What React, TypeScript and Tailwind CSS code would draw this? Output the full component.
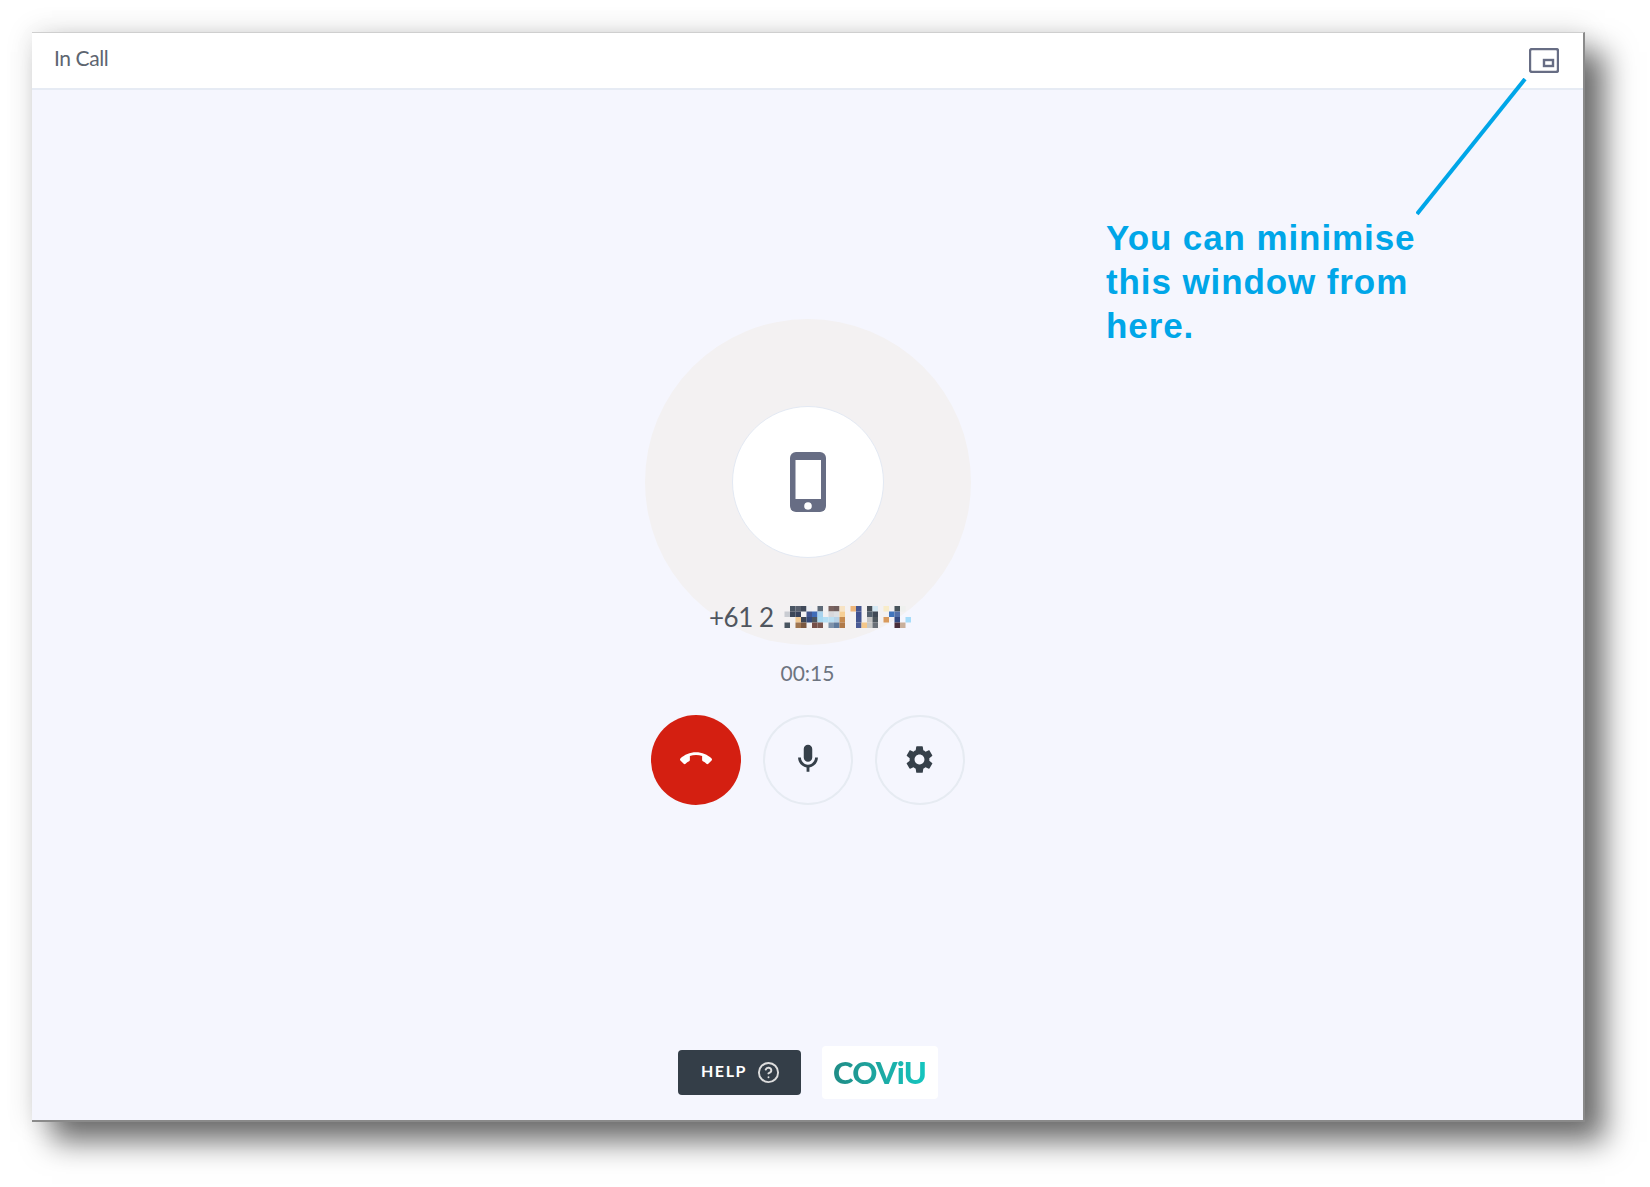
import { CircleHelp } from 'lucide-react';

// blurred phone digits: [col, row, colour]
const mosaic: [number, number, string][] = [
  [1, 0, '#4a5564'], [2, 0, '#59616e'], [3, 0, '#3f4a5a'], [4, 0, '#eef0f4'], [6, 0, '#5d6b78'], [8, 0, '#7a6460'], [9, 0, '#6f5d5c'], [10, 0, '#f7e3c4'],
  [0, 1, '#c9ccd2'], [1, 1, '#3d4658'], [2, 1, '#39435a'], [4, 1, '#42578f'], [5, 1, '#3f6cb8'], [6, 1, '#a9d3ee'], [8, 1, '#d8d8dc'], [9, 1, '#dcdfe3'], [10, 1, '#f6cf95'],
  [2, 2, '#f0c892'], [3, 2, '#3c4552'], [4, 2, '#344a78'], [5, 2, '#4b5560'], [6, 2, '#a7d9f2'], [7, 2, '#b5def4'], [8, 2, '#bbdff2'], [9, 2, '#b8d2e6'], [10, 2, '#c58a4f'],
  [0, 3, '#4a5560'], [2, 3, '#a0744f'], [3, 3, '#7a5840'], [5, 3, '#75504a'], [6, 3, '#7a5650'], [8, 3, '#7f93ab'], [9, 3, '#5f7a9c'], [10, 3, '#b07a4a'],
  [12, 0, '#eeb67a'], [13, 0, '#44558f'], [15, 0, '#465058'], [16, 0, '#d5e9f4'], [18, 0, '#f8ecc8'], [20, 0, '#46525a'], [21, 0, '#eef0ee'],
  [13, 1, '#3f5190'], [15, 1, '#52606e'], [16, 1, '#3f4a56'], [19, 1, '#3f74bc'], [20, 1, '#5270a8'],
  [13, 2, '#43548f'], [15, 2, '#c4c4c4'], [16, 2, '#50585f'], [18, 2, '#d99a5c'], [20, 2, '#324a80'], [22, 2, '#a6dcfa'],
  [13, 3, '#4a5a94'], [14, 3, '#f4c78a'], [15, 3, '#c8c8c6'], [16, 3, '#6a7078'], [20, 3, '#4a2e3a'], [21, 3, '#c9b09c'],
];

function MaskedDigits() {
  return (
    <svg width="130" height="22" viewBox="0 0 127 22" className="ml-[10px] shrink-0">
      <defs>
        <filter id="soft">
          <feGaussianBlur stdDeviation="0.5" />
        </filter>
      </defs>
      <g filter="url(#soft)">
        {mosaic.map(([c, r, fill]) => (
          <rect key={`${c}-${r}`} x={c * 5.5} y={r * 5.5} width="5.5" height="5.5" fill={fill} />
        ))}
      </g>
    </svg>
  );
}

function PhoneIcon() {
  return (
    <svg width="36" height="60" viewBox="0 0 36 60">
      <rect width="36" height="60" rx="6" fill="#676d84" />
      <rect x="5.5" y="8" width="25.5" height="39" fill="#fff" />
      <circle cx="18" cy="54" r="3.8" fill="#fff" />
    </svg>
  );
}

export default function App() {
  return (
    <div className="h-[1187px] w-[1650px] overflow-hidden bg-white pl-[32px] pt-[32px]">
      <div
        className="relative flex h-[1090px] w-[1553px] flex-col border-t border-r-2 border-b-2 border-t-[#cfcfcf] border-r-[#8a8a8a] border-b-[#8a8a8a] bg-[#f5f6fe] shadow-[20px_20px_28px_rgba(0,0,0,0.55),0_0_26px_rgba(0,0,0,0.13)]"
      >
        <header className="flex h-[57px] shrink-0 items-center justify-between border-b-2 border-[#e6ebf4] bg-white pl-[22px] pr-[24px]">
          <span className="pb-1.5 font-['Lato',sans-serif] text-[21px] tracking-[-0.4px] text-[#5d6570]">In Call</span>
          <svg width="30" height="25" viewBox="0 0 30 25" fill="none" stroke="#676d84">
            <rect x="1" y="1" width="28" height="23" rx="2" strokeWidth="2.4" />
            <rect x="15" y="12" width="9" height="6" strokeWidth="2.4" />
          </svg>
        </header>

        <main className="flex flex-1 flex-col items-center pt-[229px]">
          <div className="flex h-[326px] w-[326px] items-center justify-center rounded-full bg-[#f3f1f2]">
            <div className="flex h-[152px] w-[152px] items-center justify-center rounded-full border border-[#e3e9f3] bg-white">
              <PhoneIcon />
            </div>
          </div>

          <div className="relative ml-[6px] mt-[-43px] flex h-[30px] w-[203px] items-center font-['Lato',sans-serif] text-[26px] tracking-[-0.5px] text-[#50565f]">
            <span className="whitespace-nowrap">+61 2</span>
            <MaskedDigits />
          </div>

          <div className="mt-[26px] font-['Lato',sans-serif] text-[21px] leading-[30px] text-[#6d7480]">00:15</div>

          <div className="mt-[27px] flex items-center gap-[22px]">
            <button className="flex h-[90px] w-[90px] items-center justify-center rounded-full bg-[#d41f11]">
              <svg width="32" height="32" viewBox="0 0 24 24" fill="#fff" className="-mt-[3px]">
                <path d="M12 9c-1.6 0-3.15.25-4.6.72v3.1c0 .39-.23.74-.56.9-.98.49-1.87 1.12-2.66 1.85-.18.18-.43.28-.7.28-.28 0-.53-.11-.71-.29L.29 13.08c-.18-.17-.29-.42-.29-.7 0-.28.11-.53.29-.71C3.34 8.78 7.46 7 12 7s8.66 1.78 11.71 4.67c.18.18.29.43.29.71 0 .28-.11.53-.29.71l-2.48 2.48c-.18.18-.43.29-.71.29-.27 0-.52-.11-.7-.28-.79-.74-1.69-1.36-2.67-1.85-.33-.16-.56-.5-.56-.9v-3.1C15.15 9.25 13.6 9 12 9z" />
              </svg>
            </button>
            <button className="flex h-[90px] w-[90px] items-center justify-center rounded-full border-2 border-[#e6ebf2]">
              <svg width="34" height="34" viewBox="0 0 24 24" fill="#36404a" className="-mt-[2px]">
                <path d="M12 14c1.66 0 3-1.34 3-3V5c0-1.66-1.34-3-3-3S9 3.34 9 5v6c0 1.66 1.34 3 3 3zm5-3c0 2.76-2.24 5-5 5s-5-2.24-5-5H5c0 3.53 2.61 6.43 6 6.92V21h2v-3.08c3.39-.49 6-3.39 6-6.92h-2z" />
              </svg>
            </button>
            <button className="flex h-[90px] w-[90px] items-center justify-center rounded-full border-2 border-[#e6ebf2]">
              <svg width="33" height="33" viewBox="0 0 24 24" fill="#36404a" className="-mt-[2px]">
                <path d="M19.14 12.94c.04-.3.06-.61.06-.94 0-.32-.02-.64-.07-.94l2.03-1.58c.18-.14.23-.41.12-.61l-1.92-3.32c-.12-.22-.37-.29-.59-.22l-2.39.96c-.5-.38-1.03-.7-1.62-.94l-.36-2.54c-.04-.24-.24-.41-.48-.41h-3.84c-.24 0-.43.17-.47.41l-.36 2.54c-.59.24-1.13.57-1.62.94l-2.39-.96c-.22-.08-.47 0-.59.22L2.74 8.87c-.12.21-.08.47.12.61l2.03 1.58c-.05.3-.09.63-.09.94s.02.64.07.94l-2.03 1.58c-.18.14-.23.41-.12.61l1.92 3.32c.12.22.37.29.59.22l2.39-.96c.5.38 1.03.7 1.62.94l.36 2.54c.05.24.24.41.48.41h3.84c.24 0 .44-.17.47-.41l.36-2.54c.59-.24 1.13-.56 1.62-.94l2.39.96c.22.08.47 0 .59-.22l1.92-3.32c.12-.22.07-.47-.12-.61l-2.01-1.58zM12 15.6c-1.98 0-3.6-1.62-3.6-3.6s1.62-3.6 3.6-3.6 3.6 1.62 3.6 3.6-1.62 3.6-3.6 3.6z" />
              </svg>
            </button>
          </div>

          <div className="mt-auto flex items-center gap-[21px] pb-[21px]">
            <button className="flex h-[45px] w-[123px] items-center justify-center gap-[10px] rounded-[4px] bg-[#343e48] pl-[3px] font-['Lato',sans-serif] text-[16px] font-bold tracking-[1.6px] text-white">
              <span className="-mt-[4px]">HELP</span>
              <CircleHelp size={23} strokeWidth={2} className="text-[#dddddd]" />
            </button>
            <div className="flex h-[53px] w-[116px] items-center justify-center rounded-[4px] bg-white">
              <span className="bg-linear-to-r from-[#1f8c86] to-[#14c6c0] bg-clip-text font-['Lato',sans-serif] text-[31px] font-black leading-none tracking-[-0.8px] text-transparent">
                COViU
              </span>
            </div>
          </div>
        </main>

        {/* callout drawn over the window */}
        <svg className="pointer-events-none absolute left-[1384px] top-[45px]" width="112" height="138" viewBox="0 0 112 138">
          <line x1="109" y1="1" x2="1" y2="136" stroke="#00a6e8" strokeWidth="4" />
        </svg>
        <p className="absolute left-[1074px] top-[183px] font-['Liberation_Sans',sans-serif] text-[35px] font-bold leading-[44px] tracking-[0.9px] text-[#00a6e8]">
          You can minimise
          <br />
          this window from
          <br />
          here.
        </p>
      </div>
    </div>
  );
}
